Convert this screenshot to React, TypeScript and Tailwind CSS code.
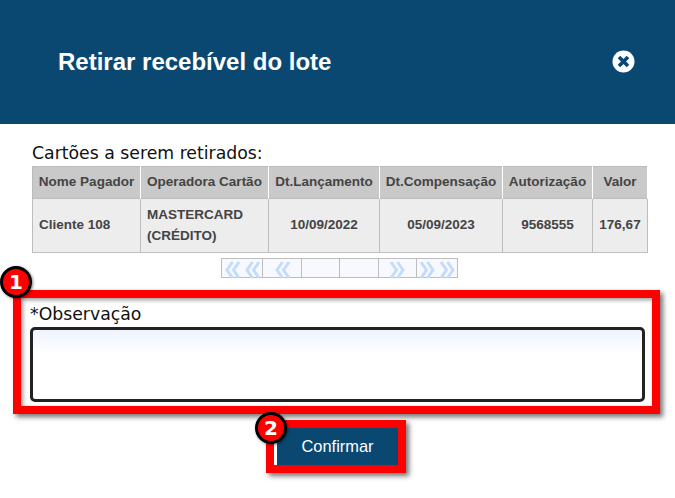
const cols = [
  { label: "Nome Pagador", w: "w-[108px]" },
  { label: "Operadora Cartão", w: "w-[128px]" },
  { label: "Dt.Lançamento", w: "w-[111px]" },
  { label: "Dt.Compensação", w: "w-[123px]" },
  { label: "Autorização", w: "w-[90px]" },
  { label: "Valor", w: "w-[55px]" },
];

function Chevrons({ dir, count }: { dir: "l" | "r"; count: number }) {
  const path = dir === "l" ? "M7.5 1 L2 9 L7.5 17 M14 1 L8.5 9 L14 17" : "M1 1 L6.5 9 L1 17 M7.5 1 L13 9 L7.5 17";
  return (
    <div className="flex gap-[5px] mt-[2px] h-[18px]">
      {Array.from({ length: count }).map((_, i) => (
        <svg key={i} width="15" height="18" viewBox="0 0 15 18" fill="none" stroke="#c4dcfb" strokeWidth="3">
          <path d={path} />
        </svg>
      ))}
    </div>
  );
}

function Badge({ n, className }: { n: string; className: string }) {
  return (
    <div
      className={
        "absolute w-[32px] h-[32px] rounded-full bg-[#f00] border-[3px] border-black flex items-center justify-center text-white font-bold text-[20px] font-['DejaVu_Sans',sans-serif] shadow-[1px_1px_3px_rgba(0,0,0,0.5)] " +
        className
      }
    >
      {n}
    </div>
  );
}

export default function App() {
  return (
    <div className="w-[675px] h-[498px] bg-white relative overflow-hidden font-['Liberation_Sans',sans-serif]">
      <header className="h-[124px] bg-[#0a4872] flex items-center justify-between pl-[58px] pr-[40px]">
        <h1 className="text-white font-bold text-[24px] leading-none">Retirar recebível do lote</h1>
        <svg className="-mt-[1px]" width="23" height="23" viewBox="0 0 23 23">
          <circle cx="11.5" cy="11.5" r="11" fill="#fff" />
          <path d="M7 7 L16 16 M16 7 L7 16" stroke="#0a4872" strokeWidth="3.6" />
        </svg>
      </header>

      <main className="pl-[32px] pr-[28px]">
        <div className="mt-[17px] h-[25px] text-[17.3px] leading-[25px] text-[#111] font-['DejaVu_Sans',sans-serif]">
          Cartões a serem retirados:
        </div>
        <table className="border-collapse table-fixed w-[615px] text-[13.5px] font-bold text-[#444]">
          <thead>
            <tr className="h-[32px] bg-[#c9c9c9]">
              {cols.map((c) => (
                <th key={c.label} className={c.w + " border-x border-t border-t-[#bbb] border-x-white first:border-l-[#bbb] last:border-r-white font-bold text-center px-0 "}>
                  {c.label}
                </th>
              ))}
            </tr>
          </thead>
          <tbody>
            <tr className="h-[54px] bg-[#ededed]">
              <td className="border border-[#bdbdbd] pl-[6px]">Cliente 108</td>
              <td className="border border-[#bdbdbd] pl-[6px] pb-[2px] leading-[21px]">MASTERCARD<br />(CRÉDITO)</td>
              <td className="border border-[#bdbdbd] text-center">10/09/2022</td>
              <td className="border border-[#bdbdbd] text-center">05/09/2023</td>
              <td className="border border-[#bdbdbd] text-center">9568555</td>
              <td className="border border-[#bdbdbd] text-center">176,67</td>
            </tr>
          </tbody>
        </table>

        <div className="mt-[5px] ml-[189px] w-[237px] h-[20px] flex border border-[#bdbdbd] bg-[#f7f9ff]">
          <div className="w-[41px] border-r border-[#bdbdbd] flex justify-center"><Chevrons dir="l" count={2} /></div>
          <div className="w-[39px] border-r border-[#bdbdbd] flex justify-center"><Chevrons dir="l" count={1} /></div>
          <div className="w-[38px] border-r border-[#bdbdbd]" />
          <div className="w-[39px] border-r border-[#bdbdbd]" />
          <div className="w-[38px] border-r border-[#bdbdbd] flex justify-center"><Chevrons dir="r" count={1} /></div>
          <div className="flex-1 flex justify-center"><Chevrons dir="r" count={2} /></div>
        </div>

        <div className="-ml-[2px] mt-[24px] h-[25px] text-[17.3px] leading-[25px] text-[#111] font-['DejaVu_Sans',sans-serif]">
          *Observação
        </div>
        <div className="-ml-[2px] w-[615px] h-[75px] border-[3px] border-[#222] rounded-[5px] bg-[linear-gradient(#eef3fd,#ffffff_35%)]" />

        <div className="mt-[26px] ml-[245px] w-[121px] h-[37px] bg-[#0a4872] flex items-center justify-center text-white text-[16.4px]">
          Confirmar
        </div>
      </main>

      <div className="absolute left-[13px] top-[290px] w-[647px] h-[124px] border-[8px] border-[#f00] shadow-[3px_3px_5px_rgba(0,0,0,0.55),inset_2px_2px_4px_rgba(0,0,0,0.4)]" />
      <div className="absolute left-[266px] top-[420px] w-[140px] h-[53px] border-[8px] border-[#f00] shadow-[3px_3px_5px_rgba(0,0,0,0.55)]" />
      <Badge n="1" className="left-0 top-[266px]" />
      <Badge n="2" className="left-[255px] top-[412px]" />
    </div>
  );
}
